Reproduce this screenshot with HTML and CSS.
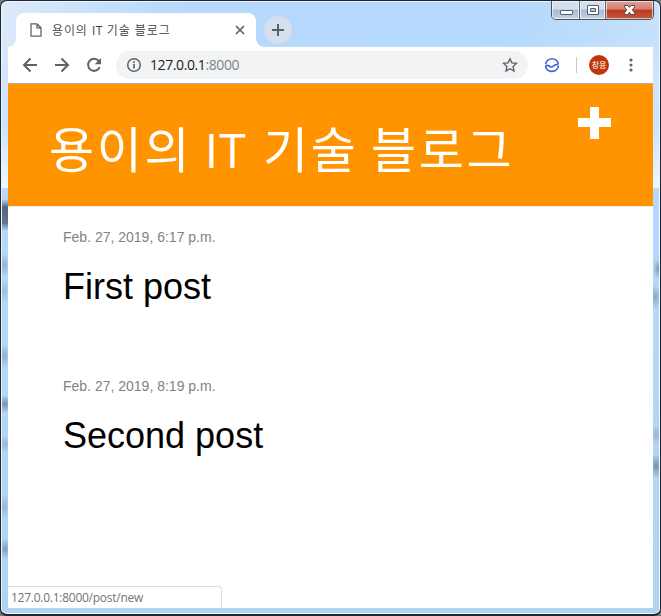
FILE: index.html
```html
<!DOCTYPE html>
<html lang="ko">
<head>
<meta charset="utf-8">
<title>용이의 IT 기술 블로그</title>
<link rel="stylesheet" href="styles.css">
</head>
<body>
<div class="window">
  <div class="controls">
    <span class="control min"><svg width="28" height="18" viewBox="0 0 28 18"><rect x="8.500" y="10.500" width="12" height="4" rx=".5" fill="#fff" stroke="#555d70"/></svg></span>
    <span class="control max"><svg width="26" height="18" viewBox="0 0 26 18"><path fill="#fff" fill-rule="evenodd" stroke="#555d70" d="M7.500 5.500h11v9h-11zM10.500 8.500v3h5v-3z"/></svg></span>
    <span class="control close"><svg width="47" height="18" viewBox="0 0 47 18"><path fill="#fff" stroke="#594653" d="M18.500 5.500h3.500l1.500 2 1.500-2h3.500v1.500l-2.200 2.800 2.200 3v1.700H25l-1.500-2.200-1.500 2.200h-3.500v-1.700l2.200-3-2.200-2.800z"/></svg></span>
  </div>
  <div class="tabs">
    <div class="tab">
      <svg class="page-icon" width="12" height="14" viewBox="0 0 12 14"><path d="M1 .8h6l4 4v8.400H1zM7 .8v4h4" fill="none" stroke="#5f6368" stroke-width="1.300"/></svg>
      <span class="tab-title">용이의 <span class="latin">IT</span> 기술 블로그</span>
      <svg class="tab-close" width="10" height="10" viewBox="0 0 10 10"><path d="M1 1l8 8M9 1l-8 8" stroke="#5f6368" stroke-width="1.700"/></svg>
    </div>
    <div class="new-tab"><svg width="12" height="12" viewBox="0 0 12 12"><path d="M6 0v12M0 6h12" stroke="#51626e" stroke-width="2"/></svg></div>
  </div>
  <div class="toolbar">
    <svg class="nav" width="16" height="16" viewBox="0 0 16 16"><path d="M15 8H2.500M8.500 1.500L2 8l6.500 6.500" fill="none" stroke="#5f6368" stroke-width="2"/></svg>
    <svg class="nav" width="16" height="16" viewBox="0 0 16 16"><path d="M1 8h12.500M7.500 1.500L14 8l-6.500 6.500" fill="none" stroke="#5f6368" stroke-width="2"/></svg>
    <svg class="nav" width="16" height="16" viewBox="0 0 16 16"><path d="M12.700 4A6 6 0 1 0 13.700 10" fill="none" stroke="#5f6368" stroke-width="2"/><path d="M15 1v6.300H8.700z" fill="#5f6368"/></svg>
    <div class="address">
      <svg width="16" height="16" viewBox="0 0 16 16"><circle cx="8" cy="8" r="6.300" fill="none" stroke="#5f6368" stroke-width="1.500"/><path d="M8 7v4.500M8 4.300V6" stroke="#5f6368" stroke-width="1.700"/></svg>
      <span class="url">127.0.0.1<span class="port">:8000</span></span>
      <svg class="star" width="16" height="16" viewBox="0 0 16 16"><path d="M8 1.800l1.900 4.100 4.500.5-3.300 3.100.9 4.500-4-2.300L4 14l.9-4.500-3.300-3.100 4.500-.5z" fill="none" stroke="#5f6368" stroke-width="1.400"/></svg>
    </div>
    <svg class="extension" width="16" height="16" viewBox="0 0 16 16"><path d="M1.700 7a6.400 6.400 0 0 1 12.600 0M1.300 9c3-2 4.200 1 6.200 1s3-3.500 7-2.500M1.500 9.200a6.600 6.600 0 0 0 13-.5" fill="none" stroke="#3c68dc" stroke-width="1.700"/></svg>
    <span class="separator"></span>
    <span class="avatar">창용</span>
    <svg class="menu" width="4" height="14" viewBox="0 0 4 14"><g fill="#5f6368"><circle cx="2" cy="2" r="1.600"/><circle cx="2" cy="7" r="1.600"/><circle cx="2" cy="12" r="1.600"/></g></svg>
  </div>
  <div class="viewport">
    <header class="page-header">
      <h1>용이의 <span class="latin">IT</span> 기술 블로그</h1>
      <svg class="add" width="33" height="32" viewBox="0 0 33 32"><path d="M12 0h9v11h12v9H21v12h-9V20H0v-9h12z" fill="#fff"/></svg>
    </header>
    <main>
      <article class="post"><time>Feb. 27, 2019, 6:17 p.m.</time><h2>First post</h2></article>
      <article class="post"><time>Feb. 27, 2019, 8:19 p.m.</time><h2>Second post</h2></article>
    </main>
    <div class="status">127.0.0.1:8000/post/new</div>
  </div>
</div>
</body>
</html>
```
FILE: styles.css
```css
* { box-sizing: border-box; }
body { margin: 0; background: #777; overflow: hidden; }
svg { display: block; flex: none; }
.window {
  position: relative;
  width: 661px;
  height: 616px;
  padding: 12px 7px 6px;
  border: 1px solid #202532;
  border-width: 1px 1px 2px;
  border-radius: 7px;
  box-shadow: inset 0 0 0 1px #eef7ff;
  background:
    linear-gradient(#b5d8fc00 198px, #56677d 206px, #64758b 222px, #b5d8fc00 230px) 1px 0 / 6px 100% no-repeat,
    radial-gradient(ellipse 7px 12px at 3px 264px, #94b2d3, transparent),
    radial-gradient(ellipse 7px 12px at 3px 290px, #9dbcdc, transparent),
    radial-gradient(ellipse 7px 12px at 3px 355px, #91adcd, transparent),
    radial-gradient(ellipse 8px 9px at 4px 403px, #758fab, transparent),
    radial-gradient(ellipse 8px 8px at 4px 443px, #9ab8c8, transparent),
    radial-gradient(ellipse 7px 12px at 3px 506px, #98b7d8, transparent),
    radial-gradient(ellipse 8px 10px at 4px 548px, #819db9, transparent),
    radial-gradient(ellipse 5px 10px at 657px 268px, #7e9dbb, transparent),
    radial-gradient(ellipse 7px 12px at 654px 296px, #87a8c8, transparent),
    radial-gradient(ellipse 6px 10px at 655px 434px, #9cb2d2, transparent),
    radial-gradient(ellipse 8px 12px at 655px 465px, #758fac, transparent),
    linear-gradient(#b5d9fc, #b0d2f5) 0 187px / 100% 430px no-repeat,
    linear-gradient(180deg, transparent 40px, #d0e5fc 80px, #cce4fd 130px, #f0f7ff 187px),
    linear-gradient(100deg, #dceafa, #b5d8fc 24%, #b5d9fc 68%, #d4e7fb 100%);
}
.controls {
  position: absolute;
  top: 0;
  right: 6px;
  display: flex;
  height: 19px;
  width: 103px;
  border: 1px solid #4c5362;
  border-top: 0;
  border-radius: 0 0 5px 5px;
  overflow: hidden;
}
.control { flex: none; height: 18px; box-shadow: inset 0 0 0 1px #ffffff99; background: linear-gradient(#d3dfec 45%, #a9bacf 50%, #c3d4e7); }
.min { width: 28px; border-right: 1px solid #596474; }
.max { width: 26px; border-right: 1px solid #596474; }
.close { width: 47px; background: linear-gradient(#dfa094, #d58071 45%, #bd3925 50%, #c45a39); }
.control svg { margin-top: -1px; }
.tabs { display: flex; height: 34px; padding-left: 8px; }
.tab {
  position: relative;
  display: flex;
  align-items: center;
  width: 240px;
  height: 34px;
  padding: 0 11px 0 14px;
  border-radius: 8px 8px 0 0;
  background: #fff;
}
.tab::before, .tab::after { content: ""; position: absolute; bottom: 0; width: 8px; height: 8px; }
.tab::before { left: -8px; background: radial-gradient(circle at 0 0, transparent 7.500px, #fff 8px); }
.tab::after { right: -8px; background: radial-gradient(circle at 100% 0, transparent 7.500px, #fff 8px); }
.tab-title { margin-left: 10px; font: 350 12px/18px "Noto Sans CJK KR", sans-serif; color: #3c4043; white-space: nowrap; letter-spacing: .85px; }
.tab-title .latin { font-family: "Open Sans", sans-serif; font-weight: 400; letter-spacing: .4px; }
.tab-close { margin-left: auto; }
.new-tab { display: grid; place-items: center; width: 28px; height: 28px; margin: 3px 0 0 8px; border-radius: 50%; background: #d5dfee; }
.toolbar { display: flex; align-items: center; height: 37px; padding: 0 20px 1px 14px; background: #fff; border-bottom: 1px solid #aeb2b8; }
.nav { margin-right: 16px; }
.address { display: flex; align-items: center; width: 412px; height: 28px; margin-left: -2px; padding: 0 10px; border-radius: 14px; background: #f1f3f4; }
.url { margin-left: 8px; font: 14px/20px "Open Sans", sans-serif; color: #202124; letter-spacing: -.4px; }
.port { color: #80868b; }
.star { margin-left: auto; }
.extension { margin-left: 16px; }
.separator { width: 1px; height: 16px; margin-left: 16px; background: #c9cbcf; }
.avatar { display: grid; place-items: center; width: 20px; height: 20px; margin-left: 12px; border-radius: 50%; background: #bf360c; color: #fff; font: 8px/20px "Noto Sans CJK KR", sans-serif; }
.menu { margin-left: 20px; }
.viewport { position: relative; height: 524px; background: #fff; }
.page-header { display: flex; justify-content: space-between; height: 123px; padding: 23px 42px 0 41px; background: #ff9400; border-bottom: 1px solid #eee; }
.page-header h1 { margin: -2px 0 0; font: 400 49px/84px "Noto Sans CJK KR", sans-serif; color: #fff; white-space: nowrap; letter-spacing: 2.700px; word-spacing: -4px; }
.page-header .latin { margin-right: 4px; font: 400 48px/60px "Open Sans", sans-serif; letter-spacing: 1px; }
main { padding: 20px 55px; }
.post { height: 149px; }
.post time { display: block; font: 14px/20px "Liberation Sans", sans-serif; color: #828282; }
.post h2 { margin: 20px 0 0; font: 36px/40px "Liberation Sans", sans-serif; color: #000; }
.status { position: absolute; left: 0; bottom: 0; width: 214px; height: 22px; padding-left: 3px; border: 1px solid #dadce0; border-width: 1px 1px 0 0; border-radius: 0 4px 0 0; background: #fff; font: 12px/21px "Open Sans", sans-serif; color: #70757a; letter-spacing: -.26px; }
```
